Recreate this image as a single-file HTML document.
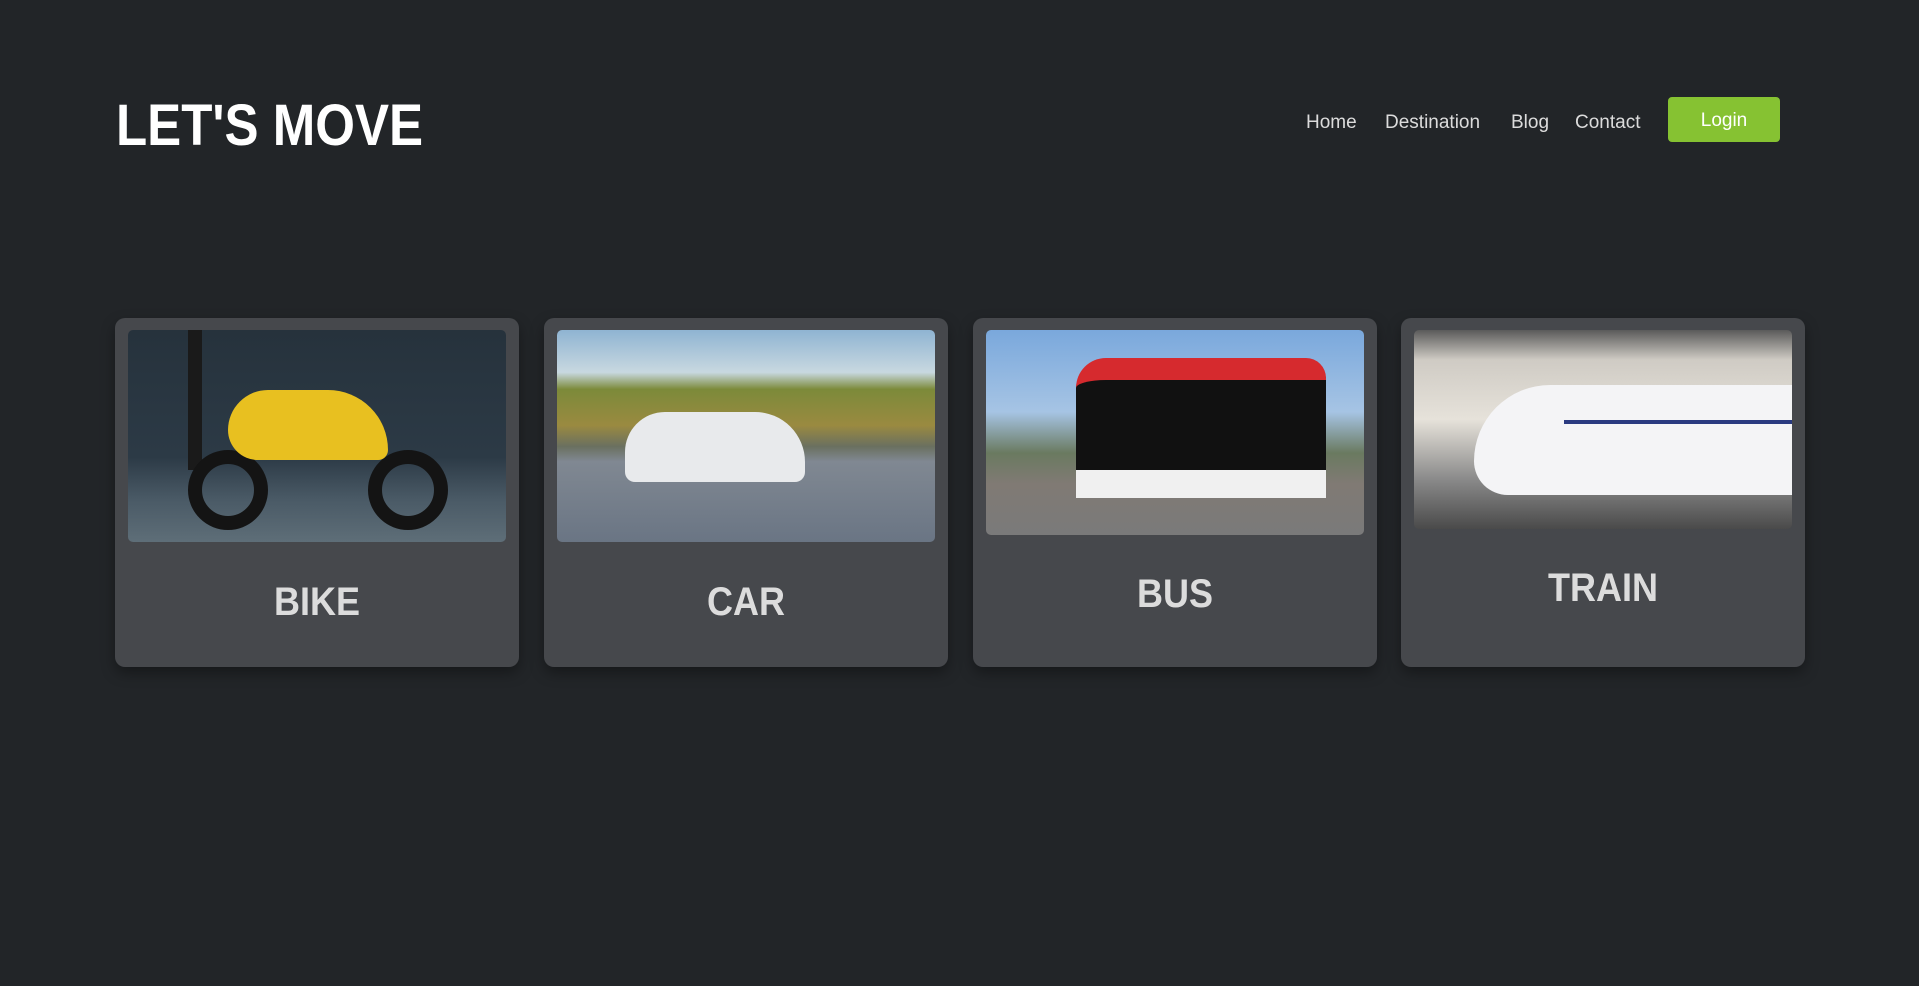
<!DOCTYPE html>
<html><head><meta charset="utf-8"><style>
*{margin:0;padding:0;box-sizing:border-box}
body{width:1919px;height:986px;background:#222528;font-family:"Liberation Sans",sans-serif;overflow:hidden;position:relative}
.logo{position:absolute;left:116px;top:92px;font-size:58px;font-weight:bold;color:#fff;transform:scaleX(0.88);transform-origin:left top;white-space:nowrap}
.nav{position:absolute;top:112px;font-size:19px;color:#dcdcdc}
.login{position:absolute;left:1668px;top:97px;width:112px;height:45px;background:#86c232;border-radius:4px;color:#fff;font-size:19px;text-align:center;line-height:47px}
.card{position:absolute;top:318px;width:404px;height:349px;background:#46484c;border-radius:10px;box-shadow:0 6px 14px rgba(0,0,0,.35)}
.img{position:absolute;left:13px;top:12px;width:378px;border-radius:5px;overflow:hidden}
.t{position:absolute;left:0;width:100%;text-align:center;font-size:40px;font-weight:bold;color:#dcdcdc;transform:scaleX(0.9)}
</style></head><body>
<div class="logo">LET'S MOVE</div>
<div class="nav" style="left:1306px">Home</div>
<div class="nav" style="left:1385px">Destination</div>
<div class="nav" style="left:1511px">Blog</div>
<div class="nav" style="left:1575px">Contact</div>
<div class="login">Login</div>

<div class="card" style="left:115px">
 <div class="img" style="height:212px;background:linear-gradient(180deg,#26323c 0%,#2c3a46 60%,#4a5a66 80%,#5e6e78 100%)">
  <div style="position:absolute;left:60px;top:0;width:14px;height:140px;background:#1a1a1a"></div>
  <div style="position:absolute;left:60px;top:120px;width:80px;height:80px;border-radius:50%;border:14px solid #141414"></div>
  <div style="position:absolute;left:240px;top:120px;width:80px;height:80px;border-radius:50%;border:14px solid #141414"></div>
  <div style="position:absolute;left:100px;top:60px;width:160px;height:70px;background:#e8c020;border-radius:40px 60px 10px 30px"></div>
 </div>
 <div class="t" style="top:262px">BIKE</div>
</div>

<div class="card" style="left:544px">
 <div class="img" style="height:212px;background:linear-gradient(180deg,#8fb4d2 0%,#c8d8e0 20%,#7c8a3a 28%,#9a8a40 45%,#6a7060 55%,#808892 62%,#6a7584 100%)">
  <div style="position:absolute;left:68px;top:82px;width:180px;height:70px;background:#e8eaec;border-radius:40px 50px 10px 10px"></div>
 </div>
 <div class="t" style="top:262px">CAR</div>
</div>

<div class="card" style="left:973px">
 <div class="img" style="height:205px;background:linear-gradient(180deg,#7aa8dc 0%,#a6c4e4 40%,#6a7a60 60%,#807a74 75%,#7a7a7a 100%)">
  <div style="position:absolute;left:90px;top:28px;width:250px;height:140px;background:#111;border-radius:30px 20px 6px 6px;border-top:22px solid #d62a2e"></div>
  <div style="position:absolute;left:90px;top:140px;width:250px;height:28px;background:#f0f0f0"></div>
 </div>
 <div class="t" style="top:254px">BUS</div>
</div>

<div class="card" style="left:1401px">
 <div class="img" style="height:199px;background:linear-gradient(180deg,#5a5a5a 0%,#cfcbc4 15%,#e6e2da 45%,#8a8a8a 75%,#4a4a4a 100%)">
  <div style="position:absolute;left:60px;top:55px;width:330px;height:110px;background:#f4f4f6;border-radius:90px 0 0 40px"></div>
  <div style="position:absolute;left:150px;top:90px;width:240px;height:4px;background:#2a3a80"></div>
 </div>
 <div class="t" style="top:248px">TRAIN</div>
</div>
</body></html>
